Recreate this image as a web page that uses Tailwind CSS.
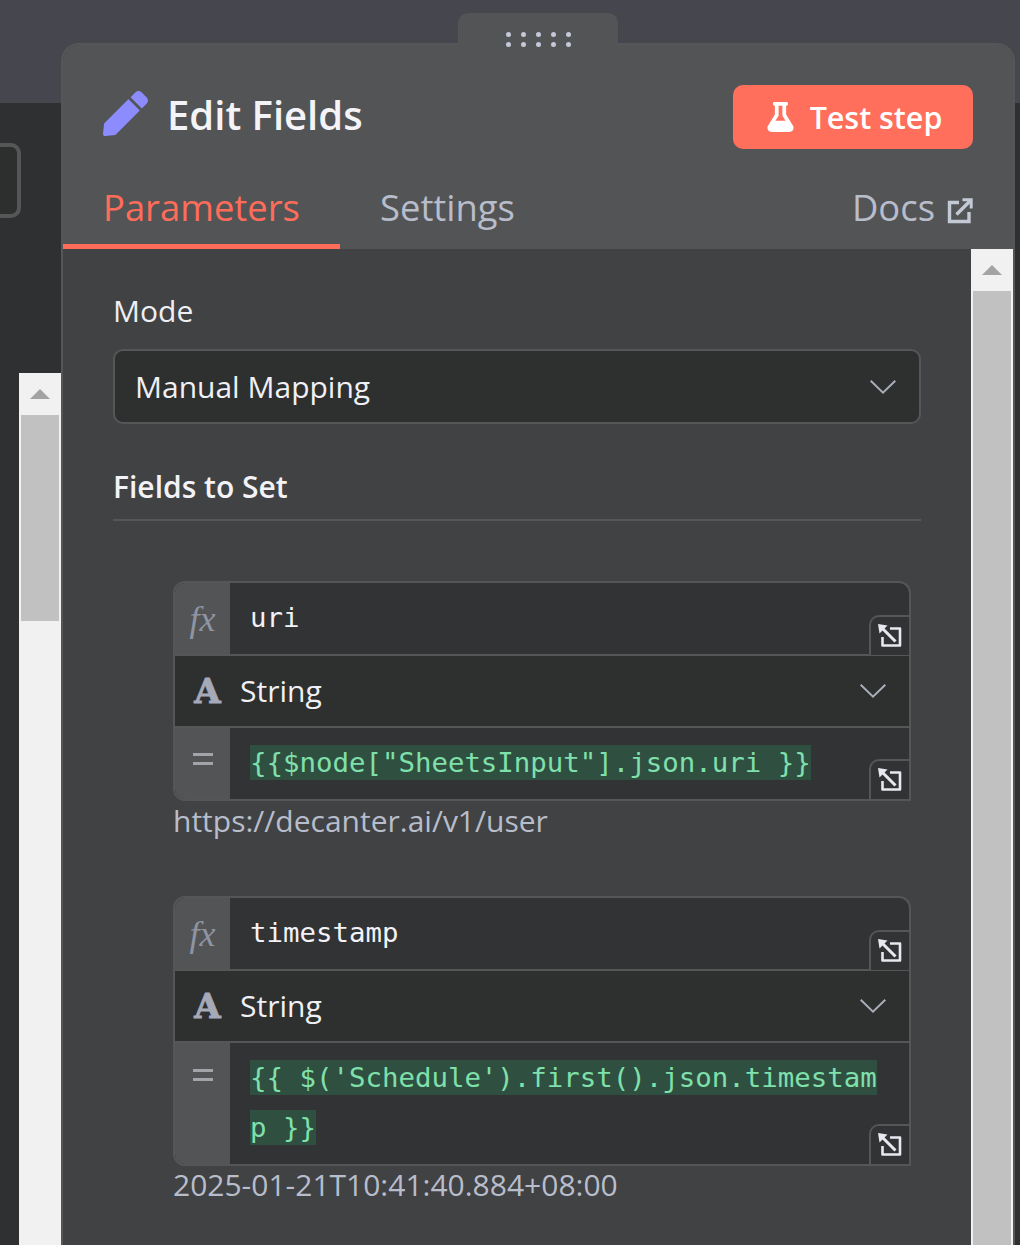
<!DOCTYPE html>
<html>
<head>
<meta charset="utf-8">
<script src="https://cdn.jsdelivr.net/npm/@tailwindcss/browser@4"></script>
</head>
<body class="m-0">
<div class="relative w-[1020px] h-[1245px] overflow-hidden bg-[#2f3031] font-['Open_Sans',sans-serif]">
  <div class="h-[103px] bg-[#46464f]"></div>

  <div class="absolute left-[-40px] top-[143px] w-[61px] h-[75px] rounded-[10px] border-4 border-[#555657] bg-[#2d2e2e]"></div>

  <div class="absolute left-[19px] top-[373px] w-[42px] h-[872px] bg-[#f1f1f1] px-[2px]">
    <div class="h-[42px] flex items-center justify-center">
      <div class="w-0 h-0 border-x-[10px] border-x-transparent border-b-[10px] border-b-[#a3a3a3]"></div>
    </div>
    <div class="h-[206px] bg-[#c1c1c1]"></div>
  </div>

  <!-- main panel -->
  <div class="absolute left-[61px] top-[43px] w-[954px] h-[1220px] rounded-t-[18px] border-2 border-[#555657] bg-[#414243] flex flex-col overflow-hidden">
    <div class="h-[204px] bg-[#535455] flex flex-col shrink-0">
      <div class="flex items-start justify-between pl-[40px] pr-[40px] pt-[40px] h-[137px]">
        <div class="flex items-center gap-[20px] h-[60px]">
          <svg viewBox="0 0 512 512" class="w-[45px] h-[45px] -translate-y-[2px]" fill="#8c8cff"><path d="M290.74 93.24l128.02 128.02-277.99 277.99-114.14 12.6C11.35 513.54-1.56 500.62.14 485.34l12.7-114.22 277.9-278.88zm207.2-19.06l-60.11-60.11c-18.75-18.75-49.16-18.75-67.91 0l-56.55 56.55 128.02 128.02 56.55-56.55c18.75-18.76 18.75-49.16 0-67.91z"/></svg>
          <span class="text-[40px] leading-[54px] font-semibold text-[#f4f4f8] -ml-[1px]">Edit Fields</span>
        </div>
        <div class="w-[240px] h-[64px] rounded-[10px] bg-[#ff6f5c] flex items-center justify-center gap-[16px] pl-[3px]">
          <svg viewBox="0 0 448 512" class="w-[27px] h-[30px]" fill="#ffffff"><path d="M437.2 403.5L320 215V64h8c13.3 0 24-10.7 24-24V24c0-13.3-10.7-24-24-24H120c-13.3 0-24 10.7-24 24v16c0 13.3 10.7 24 24 24h8v151L10.8 403.5C-18.5 450.6 15.3 512 70.9 512h306.2c55.7 0 89.4-61.5 60.1-108.5zM137.9 320l48.2-77.6c3.7-5.2 5.8-11.6 5.8-18.4V64h64v160c0 6.9 2.2 13.2 5.8 18.4l48.2 77.6h-172z"/></svg>
          <span class="text-[30.4px] leading-[40px] font-semibold text-white translate-y-[1px]">Test step</span>
        </div>
      </div>
      <div class="flex items-stretch h-[67px] pr-[40px]">
        <div class="w-[277px] pl-[40px] border-b-[5px] border-[#ff6d5a] text-[#ff6d5a] text-[36.4px] leading-[50px] font-medium">Parameters</div>
        <div class="pl-[40px] text-[#b8bdcb] text-[36.4px] leading-[50px] font-medium">Settings</div>
        <div class="ml-auto flex items-start gap-[12px] text-[#b8bdcb] text-[36.4px] leading-[50px] font-medium">
          <span>Docs</span>
          <svg viewBox="0 0 26 26" class="w-[26px] h-[26px] mt-[16px]" fill="none" stroke="#c4c9d6" stroke-width="3.4"><path d="M12 4.5H2.5V23.5H22V14"/><path d="M9.5 16.5L23 3"/><path d="M15.5 1.8H24.2V10.5" stroke-width="3"/></svg>
        </div>
      </div>
    </div>

    <div class="flex flex-1 min-h-0">
      <div class="w-[908px] pl-[50px] pr-[50px] pt-[43px]">
        <div class="text-[30px] leading-[38px] text-[#eeeef3]">Mode</div>
        <div class="mt-[19px] h-[75px] rounded-[10px] border-2 border-[#555657] bg-[#2e2f2f] flex items-center justify-between pl-[20px] pr-[23px]">
          <span class="text-[30px] leading-[40px] text-[#f0f0f5]">Manual Mapping</span>
          <svg viewBox="0 0 26 14" class="w-[26px] h-[14px]" fill="none" stroke="#a9adb8" stroke-width="2"><path d="M0.7 0.7L13 12.6L25.3 0.7"/></svg>
        </div>
        <div class="mt-[44px] text-[30px] leading-[38px] font-semibold text-[#f2f2f7]">Fields to Set</div>
        <div class="mt-[13px] h-[2px] bg-[#555657] w-[808px]"></div>

        <!-- field 1 -->
        <div class="mt-[60px] ml-[60px] w-[738px] rounded-[12px] rounded-br-none border-2 border-[#555657] overflow-hidden bg-[#323334] relative">
          <div class="flex h-[73px] border-b-2 border-[#555657]">
            <div class="w-[55px] bg-[#535455] flex items-center justify-center font-['Liberation_Serif',serif] italic text-[36px] text-[#8f94a3]">fx</div>
            <div class="pl-[20px] font-['DejaVu_Sans_Mono',monospace] text-[27.4px] leading-[70px] text-[#f2f2f7]">uri</div>
          </div>
          <div class="flex items-center h-[72px] border-b-2 border-[#555657] bg-[#2e2f2f]">
            <span class="w-[65px] text-center font-['DejaVu_Serif',serif] font-bold text-[34px] leading-[40px] text-[#a5a9b8] [-webkit-text-stroke:1px_#a5a9b8]">A</span>
            <span class="text-[30px] leading-[40px] text-[#f0f0f5]">String</span>
            <svg viewBox="0 0 26 14" class="ml-auto mr-[23px] w-[26px] h-[14px]" fill="none" stroke="#a9adb8" stroke-width="2"><path d="M0.7 0.7L13 12.6L25.3 0.7"/></svg>
          </div>
          <div class="flex h-[71px]">
            <div class="w-[55px] bg-[#535455] flex justify-center pt-[25px]"><div class="w-[20px] h-[12px] border-y-[3px] border-[#a3a4a9]"></div></div>
            <div class="pl-[20px] font-['DejaVu_Sans_Mono',monospace] text-[27.4px] leading-[70px] text-[#7fe0ac] whitespace-pre"><span class="bg-[#2f4f40] py-[2px]">{{$node["SheetsInput"].json.uri }}</span></div>
          </div>
          <div class="absolute right-0 top-[32px] w-[40px] h-[40px] rounded-tl-[10px] border-l-2 border-t-2 border-[#555657] bg-[#323334] flex items-center justify-center">
            <svg viewBox="0 0 24 24" class="w-[24px] h-[24px]" fill="none" stroke="#e8e9f0" stroke-width="2.6"><path d="M4.5 13V21.5H22V4.5H12" stroke-linejoin="round"/><path d="M17.5 17.5L5 5" stroke-width="3"/><path d="M0 0L9.5 1.5L1.5 9.5Z" fill="#e8e9f0" stroke="none"/></svg>
          </div>
          <div class="absolute right-0 bottom-0 w-[40px] h-[40px] rounded-tl-[10px] border-l-2 border-t-2 border-[#555657] bg-[#323334] flex items-center justify-center">
            <svg viewBox="0 0 24 24" class="w-[24px] h-[24px]" fill="none" stroke="#e8e9f0" stroke-width="2.6"><path d="M4.5 13V21.5H22V4.5H12" stroke-linejoin="round"/><path d="M17.5 17.5L5 5" stroke-width="3"/><path d="M0 0L9.5 1.5L1.5 9.5Z" fill="#e8e9f0" stroke="none"/></svg>
          </div>
        </div>
        <div class="ml-[60px] text-[30px] leading-[40px] text-[#b8bdcb]">https://decanter.ai/v1/user</div>

        <!-- field 2 -->
        <div class="mt-[55px] ml-[60px] w-[738px] rounded-[12px] rounded-br-none border-2 border-[#555657] overflow-hidden bg-[#323334] relative">
          <div class="flex h-[73px] border-b-2 border-[#555657]">
            <div class="w-[55px] bg-[#535455] flex items-center justify-center font-['Liberation_Serif',serif] italic text-[36px] text-[#8f94a3]">fx</div>
            <div class="pl-[20px] font-['DejaVu_Sans_Mono',monospace] text-[27.4px] leading-[70px] text-[#f2f2f7]">timestamp</div>
          </div>
          <div class="flex items-center h-[72px] border-b-2 border-[#555657] bg-[#2e2f2f]">
            <span class="w-[65px] text-center font-['DejaVu_Serif',serif] font-bold text-[34px] leading-[40px] text-[#a5a9b8] [-webkit-text-stroke:1px_#a5a9b8]">A</span>
            <span class="text-[30px] leading-[40px] text-[#f0f0f5]">String</span>
            <svg viewBox="0 0 26 14" class="ml-auto mr-[23px] w-[26px] h-[14px]" fill="none" stroke="#a9adb8" stroke-width="2"><path d="M0.7 0.7L13 12.6L25.3 0.7"/></svg>
          </div>
          <div class="flex h-[121px]">
            <div class="w-[55px] shrink-0 bg-[#535455] flex justify-center pt-[26px]"><div class="w-[20px] h-[12px] border-y-[3px] border-[#a3a4a9]"></div></div>
            <div class="pl-[20px] pr-[30px] pt-[10px] font-['DejaVu_Sans_Mono',monospace] text-[27.4px] leading-[50px] text-[#7fe0ac] break-all"><span class="bg-[#2f4f40] py-[2px]">{{ $('Schedule').first().json.timestamp }}</span></div>
          </div>
          <div class="absolute right-0 top-[32px] w-[40px] h-[40px] rounded-tl-[10px] border-l-2 border-t-2 border-[#555657] bg-[#323334] flex items-center justify-center">
            <svg viewBox="0 0 24 24" class="w-[24px] h-[24px]" fill="none" stroke="#e8e9f0" stroke-width="2.6"><path d="M4.5 13V21.5H22V4.5H12" stroke-linejoin="round"/><path d="M17.5 17.5L5 5" stroke-width="3"/><path d="M0 0L9.5 1.5L1.5 9.5Z" fill="#e8e9f0" stroke="none"/></svg>
          </div>
          <div class="absolute right-0 bottom-0 w-[40px] h-[40px] rounded-tl-[10px] border-l-2 border-t-2 border-[#555657] bg-[#323334] flex items-center justify-center">
            <svg viewBox="0 0 24 24" class="w-[24px] h-[24px]" fill="none" stroke="#e8e9f0" stroke-width="2.6"><path d="M4.5 13V21.5H22V4.5H12" stroke-linejoin="round"/><path d="M17.5 17.5L5 5" stroke-width="3"/><path d="M0 0L9.5 1.5L1.5 9.5Z" fill="#e8e9f0" stroke="none"/></svg>
          </div>
        </div>
        <div class="ml-[60px] -mt-[1px] text-[30px] leading-[40px] text-[#b8bdcb]">2025-01-21T10:41:40.884+08:00</div>
      </div>
      <div class="w-[42px] shrink-0 bg-[#f1f1f1] px-[2px]">
        <div class="h-[42px] flex items-center justify-center">
          <div class="w-0 h-0 border-x-[10px] border-x-transparent border-b-[10px] border-b-[#a3a3a3]"></div>
        </div>
        <div class="h-[960px] bg-[#c1c1c1]"></div>
      </div>
    </div>
  </div>

  <!-- drag handle over the panel -->
  <div class="absolute left-[458px] top-[13px] w-[160px] h-[40px] rounded-t-[10px] bg-[#535455] flex flex-col items-center pt-[19px] gap-[5px]">
    <div class="flex gap-[10px]">
      <span class="w-[5px] h-[5px] rounded-full bg-[#c5c8d8]"></span><span class="w-[5px] h-[5px] rounded-full bg-[#c5c8d8]"></span><span class="w-[5px] h-[5px] rounded-full bg-[#c5c8d8]"></span><span class="w-[5px] h-[5px] rounded-full bg-[#c5c8d8]"></span><span class="w-[5px] h-[5px] rounded-full bg-[#c5c8d8]"></span>
    </div>
    <div class="flex gap-[10px]">
      <span class="w-[5px] h-[5px] rounded-full bg-[#c5c8d8]"></span><span class="w-[5px] h-[5px] rounded-full bg-[#c5c8d8]"></span><span class="w-[5px] h-[5px] rounded-full bg-[#c5c8d8]"></span><span class="w-[5px] h-[5px] rounded-full bg-[#c5c8d8]"></span><span class="w-[5px] h-[5px] rounded-full bg-[#c5c8d8]"></span>
    </div>
  </div>
</div>
</body>
</html>
